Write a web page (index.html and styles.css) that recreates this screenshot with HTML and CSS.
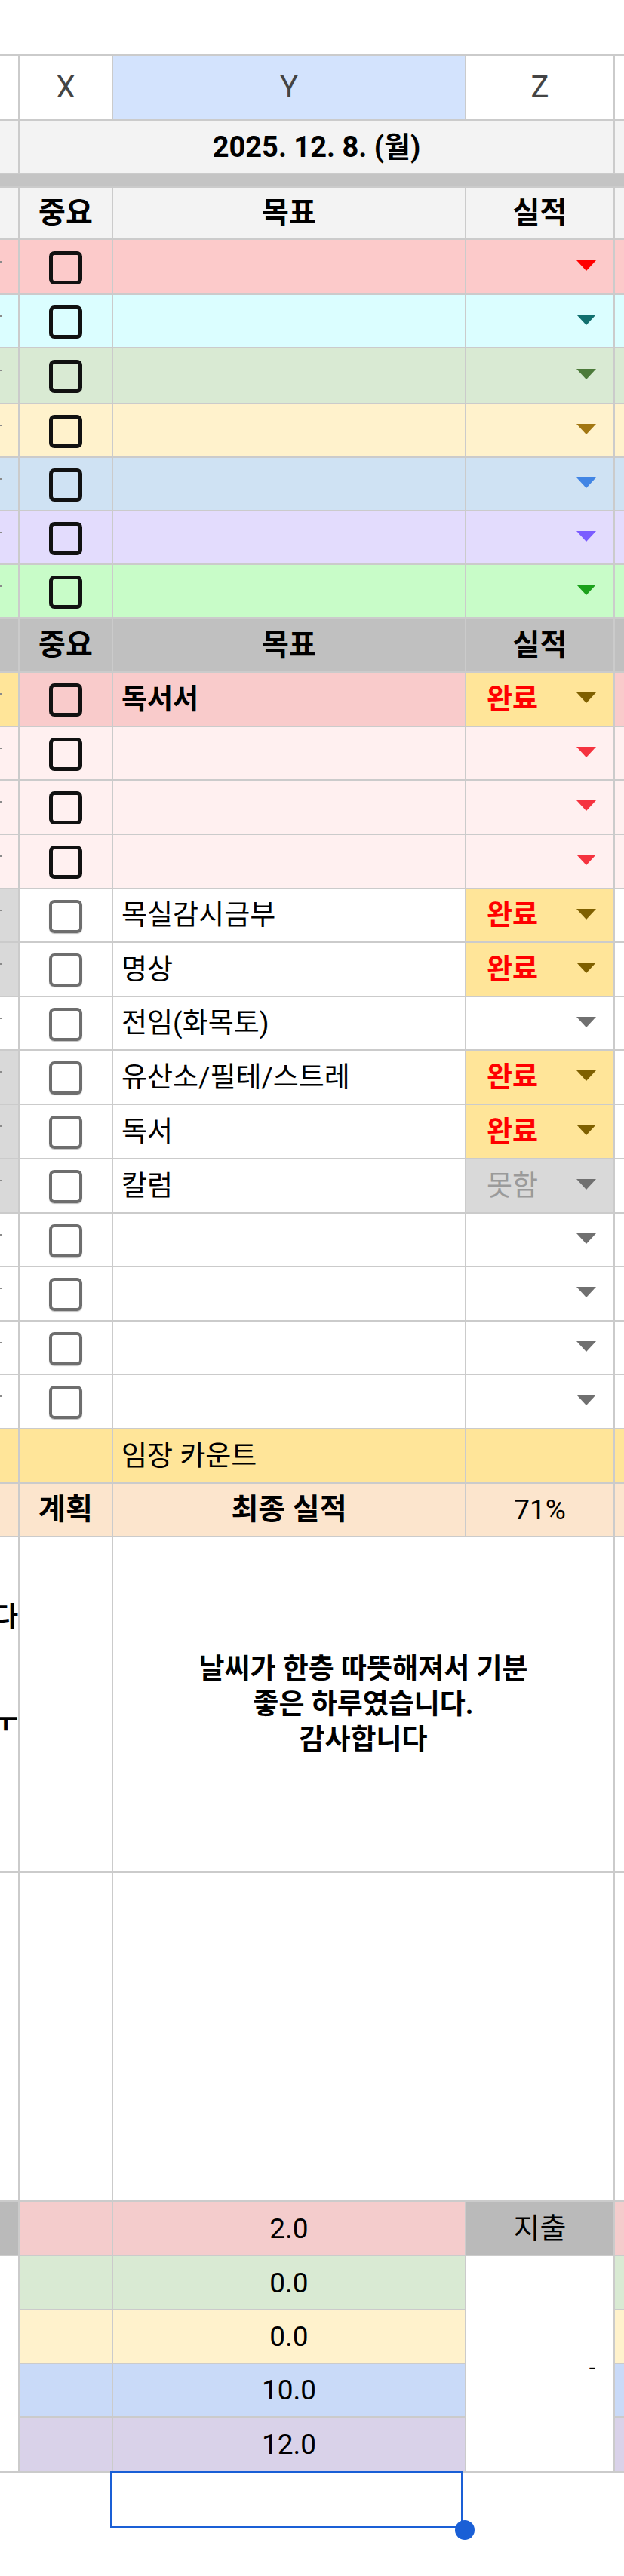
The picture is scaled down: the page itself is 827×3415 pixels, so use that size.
FILE: index.html
```html
<!DOCTYPE html>
<html lang="ko">
<head>
<meta charset="utf-8">
<title>Sheet</title>
<link rel="stylesheet" href="styles.css">
</head>
<body>
<div class="page">
  <div class="topspace"></div>
  <div class="grid">
    <!-- column letters -->
    <div class="c bw"></div>
    <div class="c colh bw">X</div>
    <div class="c colh bsel">Y</div>
    <div class="c colh bw">Z</div>
    <div class="c bw"></div>
    <!-- date -->
    <div class="c blg"></div>
    <div class="c blg date s3">2025. 12. 8. (월)</div>
    <div class="c blg"></div>
    <!-- band -->
    <div class="band s5"></div>
    <!-- header -->
    <div class="c blg"></div>
    <div class="c blg hd">중요</div>
    <div class="c blg hd">목표</div>
    <div class="c blg hd">실적</div>
    <div class="c blg"></div>

    <!-- color rows -->
    <div class="c r-pink"><span class="nub"></span></div>
    <div class="c r-pink ctr"><span class="cb"></span></div>
    <div class="c r-pink"></div>
    <div class="c r-pink"><span class="dd t-red"></span></div>
    <div class="c r-pink"></div>

    <div class="c r-cyan"><span class="nub"></span></div>
    <div class="c r-cyan ctr"><span class="cb"></span></div>
    <div class="c r-cyan"></div>
    <div class="c r-cyan"><span class="dd t-teal"></span></div>
    <div class="c r-cyan"></div>

    <div class="c r-green"><span class="nub"></span></div>
    <div class="c r-green ctr"><span class="cb"></span></div>
    <div class="c r-green"></div>
    <div class="c r-green"><span class="dd t-green"></span></div>
    <div class="c r-green"></div>

    <div class="c r-yellow"><span class="nub"></span></div>
    <div class="c r-yellow ctr"><span class="cb"></span></div>
    <div class="c r-yellow"></div>
    <div class="c r-yellow"><span class="dd t-gold"></span></div>
    <div class="c r-yellow"></div>

    <div class="c r-blue"><span class="nub"></span></div>
    <div class="c r-blue ctr"><span class="cb"></span></div>
    <div class="c r-blue"></div>
    <div class="c r-blue"><span class="dd t-blue"></span></div>
    <div class="c r-blue"></div>

    <div class="c r-purple"><span class="nub"></span></div>
    <div class="c r-purple ctr"><span class="cb"></span></div>
    <div class="c r-purple"></div>
    <div class="c r-purple"><span class="dd t-purple"></span></div>
    <div class="c r-purple"></div>

    <div class="c r-lime"><span class="nub"></span></div>
    <div class="c r-lime ctr"><span class="cb"></span></div>
    <div class="c r-lime"></div>
    <div class="c r-lime"><span class="dd t-lime"></span></div>
    <div class="c r-lime"></div>

    <!-- second header -->
    <div class="c bgray"></div>
    <div class="c bgray hd">중요</div>
    <div class="c bgray hd">목표</div>
    <div class="c bgray hd">실적</div>
    <div class="c bgray"></div>

    <!-- 독서서 -->
    <div class="c bgold"><span class="nub"></span></div>
    <div class="c bpink2 ctr"><span class="cb"></span></div>
    <div class="c bpink2 txt strong">독서서</div>
    <div class="c bgold"><span class="done">완료</span><span class="dd t-olive"></span></div>
    <div class="c bpink2"></div>

    <div class="c blpink"><span class="nub"></span></div>
    <div class="c blpink ctr"><span class="cb"></span></div>
    <div class="c blpink"></div>
    <div class="c blpink"><span class="dd t-red2"></span></div>
    <div class="c blpink"></div>

    <div class="c blpink"><span class="nub"></span></div>
    <div class="c blpink ctr"><span class="cb"></span></div>
    <div class="c blpink"></div>
    <div class="c blpink"><span class="dd t-red2"></span></div>
    <div class="c blpink"></div>

    <div class="c blpink"><span class="nub"></span></div>
    <div class="c blpink ctr"><span class="cb"></span></div>
    <div class="c blpink"></div>
    <div class="c blpink"><span class="dd t-red2"></span></div>
    <div class="c blpink"></div>

    <!-- task rows -->
    <div class="c bside"><span class="nub"></span></div>
    <div class="c bw ctr"><span class="cb gray"></span></div>
    <div class="c bw txt">목실감시금부</div>
    <div class="c bgold"><span class="done">완료</span><span class="dd t-olive"></span></div>
    <div class="c bw"></div>

    <div class="c bside"><span class="nub"></span></div>
    <div class="c bw ctr"><span class="cb gray"></span></div>
    <div class="c bw txt">명상</div>
    <div class="c bgold"><span class="done">완료</span><span class="dd t-olive"></span></div>
    <div class="c bw"></div>

    <div class="c bw"><span class="nub"></span></div>
    <div class="c bw ctr"><span class="cb gray"></span></div>
    <div class="c bw txt">전임(화목토)</div>
    <div class="c bw"><span class="dd t-gray"></span></div>
    <div class="c bw"></div>

    <div class="c bside"><span class="nub"></span></div>
    <div class="c bw ctr"><span class="cb gray"></span></div>
    <div class="c bw txt">유산소/필테/스트레</div>
    <div class="c bgold"><span class="done">완료</span><span class="dd t-olive"></span></div>
    <div class="c bw"></div>

    <div class="c bside"><span class="nub"></span></div>
    <div class="c bw ctr"><span class="cb gray"></span></div>
    <div class="c bw txt">독서</div>
    <div class="c bgold"><span class="done">완료</span><span class="dd t-olive"></span></div>
    <div class="c bw"></div>

    <div class="c bside"><span class="nub"></span></div>
    <div class="c bw ctr"><span class="cb gray"></span></div>
    <div class="c bw txt">칼럼</div>
    <div class="c bside"><span class="fail">못함</span><span class="dd t-gray"></span></div>
    <div class="c bw"></div>

    <div class="c bw"><span class="nub"></span></div>
    <div class="c bw ctr"><span class="cb gray"></span></div>
    <div class="c bw"></div>
    <div class="c bw"><span class="dd t-gray"></span></div>
    <div class="c bw"></div>

    <div class="c bw"><span class="nub"></span></div>
    <div class="c bw ctr"><span class="cb gray"></span></div>
    <div class="c bw"></div>
    <div class="c bw"><span class="dd t-gray"></span></div>
    <div class="c bw"></div>

    <div class="c bw"><span class="nub"></span></div>
    <div class="c bw ctr"><span class="cb gray"></span></div>
    <div class="c bw"></div>
    <div class="c bw"><span class="dd t-gray"></span></div>
    <div class="c bw"></div>

    <div class="c bw"><span class="nub"></span></div>
    <div class="c bw ctr"><span class="cb gray"></span></div>
    <div class="c bw"></div>
    <div class="c bw"><span class="dd t-gray"></span></div>
    <div class="c bw"></div>

    <!-- 임장 카운트 -->
    <div class="c bgold"></div>
    <div class="c bgold"></div>
    <div class="c bgold txt">임장 카운트</div>
    <div class="c bgold"></div>
    <div class="c bgold"></div>

    <!-- 계획 -->
    <div class="c bpeach"></div>
    <div class="c bpeach hd">계획</div>
    <div class="c bpeach hd">최종 실적</div>
    <div class="c bpeach num">71%</div>
    <div class="c bpeach"></div>

    <!-- memo -->
    <div class="c bw clip"><span class="frag f1">다</span><span class="frag f2">ㅜ</span></div>
    <div class="c bw"></div>
    <div class="c bw memo s2"><p>날씨가 한층 따뜻해져서 기분<br>좋은 하루였습니다.<br>감사합니다</p></div>
    <div class="c bw"></div>

    <!-- empty big -->
    <div class="c bw"></div>
    <div class="c bw"></div>
    <div class="c bw s2"></div>
    <div class="c bw"></div>

    <!-- numbers -->
    <div class="c bdgray"></div>
    <div class="c n-pink"></div>
    <div class="c n-pink num">2.0</div>
    <div class="c bdgray num kr">지출</div>
    <div class="c n-pink"></div>

    <div class="c bw r4"></div>
    <div class="c n-green"></div>
    <div class="c n-green num">0.0</div>
    <div class="c bw r4 dash">-</div>
    <div class="c n-green"></div>

    <div class="c n-yellow"></div>
    <div class="c n-yellow num">0.0</div>
    <div class="c n-yellow"></div>

    <div class="c n-blue"></div>
    <div class="c n-blue num">10.0</div>
    <div class="c n-blue"></div>

    <div class="c n-purple"></div>
    <div class="c n-purple num">12.0</div>
    <div class="c n-purple"></div>
  </div>
  <div class="below">
    <div class="selbox"><span class="handle"></span></div>
  </div>
</div>
</body>
</html>
```
FILE: styles.css
```css
* { box-sizing: border-box; }
html, body { margin: 0; padding: 0; background: #fff; }
body {
  width: 827px;
  height: 3415px;
  overflow: hidden;
  font-family: Roboto, "Noto Sans CJK KR", "Noto Sans", sans-serif;
  color: #000;
}
.page { width: 827px; }
.topspace { height: 72px; background: #fff; }

.grid {
  display: grid;
  grid-template-columns: 24px 122px 466px 195px 12px;
  grid-template-rows:
    84px 69px 16px 67px
    71px 69px 72px 69px 69px 69px 69px
    70px 70px 69px 70px 70px
    69px 70px 69px 70px 70px 70px
    69px 70px 69px 70px
    70px 69px 443px 434px
    70px 70px 69px 69px 71px;
  gap: 2px;
  padding: 2px 0;
  background: #cbcbcb;
}

.c {
  display: flex;
  align-items: center;
  min-width: 0;
  overflow: hidden;
  font-size: 37px;
  line-height: 1;
  position: relative;
}
.ctr { justify-content: center; }
.s2 { grid-column: span 2; }
.s3 { grid-column: span 3; }
.s5 { grid-column: 1 / -1; }
.r4 { grid-row: span 4; }

.band { background: #c4c4c4; }

/* backgrounds */
.bw { background: #fff; }
.bsel { background: #d3e3fd; }
.blg { background: #f3f3f3; }
.bgray { background: #c0c0c0; }
.bdgray { background: #bababa; }
.bside { background: #d9d9d9; }
.bgold { background: #ffe599; }
.bpink2 { background: #f9cbcb; }
.blpink { background: #fff0f0; }
.bpeach { background: #fce5cd; }
.r-pink { background: #fccaca; }
.r-cyan { background: #dbfeff; }
.r-green { background: #d9ead3; }
.r-yellow { background: #fff2cc; }
.r-blue { background: #cfe2f3; }
.r-purple { background: #e3dcfd; }
.r-lime { background: #c8fcc8; }
.n-pink { background: #f4cccc; }
.n-green { background: #d9ead3; }
.n-yellow { background: #fff2cc; }
.n-blue { background: #c9daf8; }
.n-purple { background: #d9d2e9; }

/* text */
.colh {
  justify-content: center;
  font-size: 40px;
  color: #444;
  font-weight: 400;
}
.date {
  justify-content: center;
  font-weight: 700;
  font-size: 38px;
}
.hd {
  justify-content: center;
  font-weight: 700;
  font-size: 39px;
}
.txt { padding-left: 11px; white-space: nowrap; font-size: 37px; }
.strong { font-weight: 700; }
.num { justify-content: center; font-size: 37px; }
.num.kr { font-size: 38px; }
.done {
  color: #ff0000;
  font-weight: 700;
  padding-left: 27px;
  font-size: 37px;
}
.fail {
  color: #9a9a9a;
  padding-left: 27px;
  font-size: 37px;
}
.dash {
  justify-content: flex-end;
  padding-right: 24px;
  font-size: 30px;
  padding-top: 10px;
}

.memo {
  justify-content: center;
  text-align: center;
}
.memo p {
  margin: 0;
  font-weight: 700;
  font-size: 37px;
  line-height: 47px;
}

.clip {
  flex-direction: column;
  align-items: flex-end;
  justify-content: flex-start;
}
.frag {
  font-weight: 700;
  font-size: 36px;
  line-height: 36px;
  white-space: nowrap;
  flex-shrink: 0;
}
.f1 { margin-top: 88px; }
.f2 { margin-top: 104px; }

/* checkbox */
.cb {
  width: 44px;
  height: 44px;
  border: 5px solid #111;
  border-radius: 7px;
  margin-top: 2px;
}
.cb.gray {
  border: 4px solid #6e6e6e;
  box-shadow: 0 1px 1px rgba(0,0,0,0.25);
}

/* dropdown triangle */
.dd {
  margin-left: auto;
  margin-right: 23px;
  margin-bottom: 4px;
  width: 0;
  height: 0;
  border-left: 13px solid transparent;
  border-right: 13px solid transparent;
  border-top: 14px solid #707070;
}
.t-red { border-top-color: #ff0000; }
.t-red2 { border-top-color: #f5333f; }
.t-teal { border-top-color: #12706f; }
.t-green { border-top-color: #4c7a3a; }
.t-gold { border-top-color: #a27712; }
.t-blue { border-top-color: #4285e4; }
.t-purple { border-top-color: #7b5cff; }
.t-lime { border-top-color: #1ba11b; }
.t-olive { border-top-color: #7f6000; }
.t-gray { border-top-color: #707070; }

.nub {
  width: 3px;
  height: 2px;
  background: #8a8a8a;
  margin-bottom: 14px;
}

/* selection */
.below {
  padding-left: 146px;
}
.selbox {
  position: relative;
  margin-top: -2px;
  width: 468px;
  height: 76px;
  border: 3px solid #1a5fd6;
}
.handle {
  position: absolute;
  left: 454px;
  top: 62px;
  width: 26px;
  height: 26px;
  border-radius: 50%;
  background: #1a5fd6;
}
```
